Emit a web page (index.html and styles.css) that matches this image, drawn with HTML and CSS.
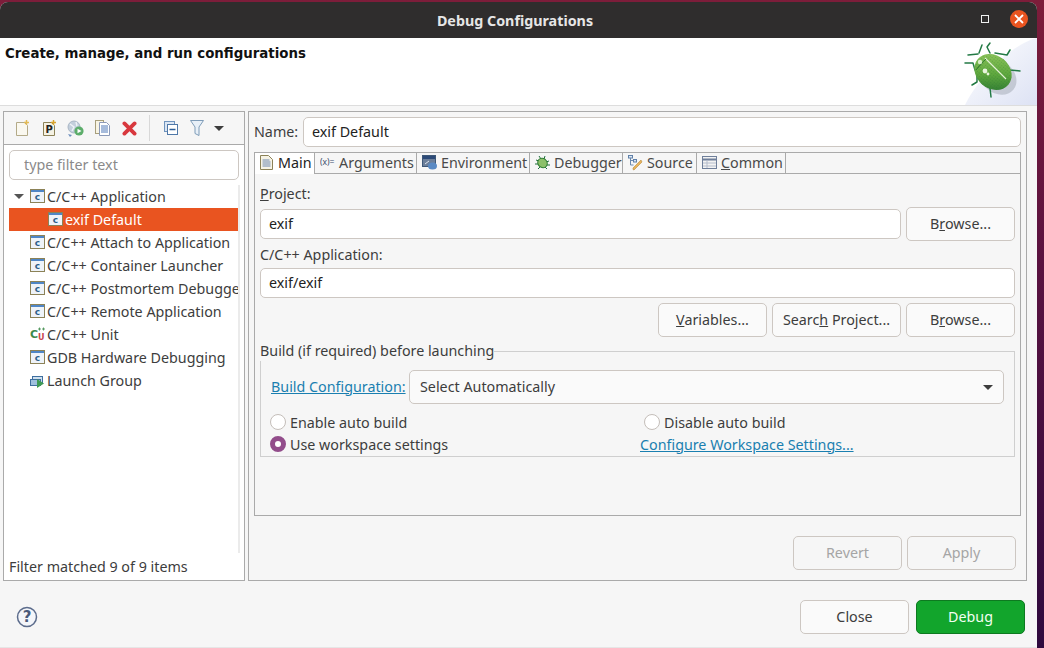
FILE: index.html
```html
<!DOCTYPE html>
<html lang="en">
<head>
  <meta charset="UTF-8" />
  <title>Debug Configurations</title>
  <link rel="stylesheet" href="styles.css">
</head>
<body>

<svg class="defs" width="0" height="0">
  <defs>
    <linearGradient id="bugBody" x1="0" y1="0" x2="1" y2="1">
      <stop offset="0" stop-color="#9ccd63"/>
      <stop offset="0.55" stop-color="#5fa83e"/>
      <stop offset="1" stop-color="#236f30"/>
    </linearGradient>
    <linearGradient id="bannerFade" x1="0" y1="0" x2="1" y2="1">
      <stop offset="0" stop-color="#ffffff"/>
      <stop offset="1" stop-color="#dde2f4"/>
    </linearGradient>
    <pattern id="bugDots" width="2.500" height="2.500" patternUnits="userSpaceOnUse">
      <circle cx="1" cy="1" r=".5" fill="#1f6b2c" opacity=".45"/>
    </pattern>
    <symbol id="app" viewBox="0 0 15 15">
      <rect x="0.5" y="0.5" width="14" height="13" fill="#eef3f9" stroke="#8c8257"/>
      <rect x="1" y="1" width="13" height="2" fill="#4f86c6"/>
      <text x="7.5" y="11" text-anchor="middle" class="icon-letter" fill="#2c5f8a">c</text>
    </symbol>
  </defs>
</svg>

<div class="window">
  <header class="titlebar">
    <h1>Debug Configurations</h1>
    <div class="wm-buttons">
      <span class="wm-max"></span>
      <span class="wm-close">
        <svg width="12" height="12" viewBox="0 0 12 12"><path d="M2 2l8 8M10 2l-8 8" stroke="#fff" stroke-width="1.800"/></svg>
      </span>
    </div>
  </header>

  <section class="banner">
    <h2>Create, manage, and run configurations</h2>
    <svg class="banner-logo" width="80" height="67" viewBox="0 0 80 67">
      <path d="M80 0C60 4 24 34 8 67H80z" fill="url(#bannerFade)"/>
      <ellipse cx="41" cy="39" rx="20" ry="16" transform="rotate(40 41 39)" fill="#8f96a0" opacity="0.4"/>
      <g fill="none" stroke="#237a45" stroke-width="1.500" stroke-linecap="round" stroke-linejoin="round">
        <path d="M33 5l-3 4 3 6"/>
        <path d="M25 7l-3 8"/>
        <path d="M11 17l10-1"/>
        <path d="M53 12l-3 5-12-2"/>
        <path d="M8 25h8l2 7"/>
        <path d="M15 47l5-3v-7"/>
        <path d="M63 33l-10-1-7-10"/>
        <path d="M34 59l-1-9-8-5"/>
      </g>
      <ellipse cx="36" cy="34" rx="20" ry="16.500" transform="rotate(40 36 34)" fill="url(#bugBody)"/>
      <ellipse cx="36" cy="34" rx="20" ry="16.500" transform="rotate(40 36 34)" fill="url(#bugDots)"/>
      <path d="M28 20l21 21" stroke="#e4f2d8" stroke-width="1.100"/>
      <path d="M29 21c-3 3-7 7-10 11" stroke="#2f7d32" stroke-width="1"/>
      <circle cx="23" cy="24" r="2.200" fill="#d8edc8"/>
      <circle cx="28" cy="33" r="2.400" fill="#e8f4dc"/>
      <circle cx="31" cy="36" r="1.400" fill="#e8f4dc"/>
    </svg>
  </section>

  <main class="workspace">
    <aside class="panel side">
      <div class="toolbar">
        <svg class="tool-new" width="14" height="16" viewBox="0 0 14 16">
          <path d="M.5 2.500h8l3 3v10H.5z" fill="#faf8ef" stroke="#b3aa88"/>
          <path d="M10.500 0v5M8 2.500h5" stroke="#e3bb55" stroke-width="1.500"/>
        </svg>
        <svg class="tool-proto" width="14" height="16" viewBox="0 0 14 16">
          <path d="M.5 2.500h8l3 3v10H.5z" fill="#f5f2e4" stroke="#8c8257"/>
          <text x="2.500" y="13" class="icon-proto" fill="#222">P</text>
          <path d="M10.500 0v5M8 2.500h5" stroke="#d9a52e" stroke-width="1.500"/>
        </svg>
        <svg class="tool-launch" width="17" height="17" viewBox="0 0 17 17">
          <circle cx="7" cy="7" r="6" fill="#c3cfdc" stroke="#a9b6c5"/>
          <path d="M3 4l4 3-2 4M9 2l1 4" stroke="#eef2f6" stroke-width="1.400" fill="none"/>
          <path d="M1 14l4 1-2 2z" fill="#6d8fbd"/>
          <circle cx="12" cy="11" r="4.600" fill="#5cad6a"/>
          <path d="M10.500 8.800l4 2.200-4 2.200z" fill="#fff"/>
        </svg>
        <svg class="tool-copy" width="15" height="16" viewBox="0 0 15 16">
          <rect x=".5" y=".5" width="8" height="13" fill="#f8f4e4" stroke="#a89f7c"/>
          <path d="M4.500 2.500h7l3 3v10h-10z" fill="#fff" stroke="#8c9ab8"/>
          <path d="M6 6h7M6 8h7M6 10h7M6 12h7" stroke="#4f78b8"/>
        </svg>
        <svg class="tool-delete" width="15" height="15" viewBox="0 0 15 15">
          <path d="M2.400 2.400l10.200 10.200M12.600 2.400L2.400 12.600" stroke="#d8383e" stroke-width="3.800" stroke-linecap="round"/>
        </svg>
        <span class="tool-sep"></span>
        <svg class="tool-collapse" width="14" height="14" viewBox="0 0 14 14">
          <rect x=".5" y=".5" width="10" height="10" fill="#dbe6f3" stroke="#6f93bd"/>
          <rect x="3.500" y="3.500" width="10" height="10" fill="#fff" stroke="#4f78a8"/>
          <path d="M5.500 8.500h6" stroke="#2f5f98" stroke-width="1.400"/>
        </svg>
        <svg class="tool-filter" width="14" height="16" viewBox="0 0 14 16">
          <path d="M.5.5h13L9 7v8.500l-4-2V7z" fill="#e8f0f8" stroke="#7f9cb8"/>
        </svg>
        <span class="tool-arrow"></span>
      </div>

      <input class="filter" type="text" placeholder="type filter text">

      <ul class="tree">
        <li class="tree-row"><span class="twisty"></span><svg class="ico"><use href="#app"/></svg>C/C++ Application</li>
        <li class="tree-row child selected"><svg class="ico"><use href="#app"/></svg>exif Default</li>
        <li class="tree-row"><svg class="ico"><use href="#app"/></svg>C/C++ Attach to Application</li>
        <li class="tree-row"><svg class="ico"><use href="#app"/></svg>C/C++ Container Launcher</li>
        <li class="tree-row"><svg class="ico"><use href="#app"/></svg>C/C++ Postmortem Debugger</li>
        <li class="tree-row"><svg class="ico"><use href="#app"/></svg>C/C++ Remote Application</li>
        <li class="tree-row">
          <svg class="ico" viewBox="0 0 15 15">
            <text x="0" y="10.500" class="icon-unit-c" fill="#3d8a4a">C</text>
            <path d="M8 2h3M9.500.5v3M12 2h3M13.500.5v3" stroke="#3d8a4a" stroke-width=".8"/>
            <text x="8" y="13" class="icon-small" fill="#c8444c">U</text>
          </svg>C/C++ Unit</li>
        <li class="tree-row"><svg class="ico"><use href="#app"/></svg>GDB Hardware Debugging</li>
        <li class="tree-row">
          <svg class="ico" viewBox="0 0 15 15">
            <rect x="2.500" y="3.500" width="10" height="7" fill="#cfe0ef" stroke="#3f6f9f"/>
            <rect x=".5" y="6.500" width="10" height="6" fill="#9fc0de" stroke="#3f6f9f"/>
            <path d="M7 6l7 4.500L7 15z" fill="#3f9a55"/>
          </svg>Launch Group</li>
      </ul>

      <p class="match-count">Filter matched 9 of 9 items</p>
    </aside>

    <section class="panel detail">
      <div class="name-row">
        <label for="cfgName">Name:</label>
        <input class="field" id="cfgName" type="text" value="exif Default">
      </div>

      <div class="tab-folder">
        <div class="tabs">
          <div class="tab active">
            <svg class="tab-ico main-ico" width="13" height="15" viewBox="0 0 13 15">
              <path d="M.5.5h8l4 4v10H.5z" fill="#f6f3e6" stroke="#8c8257"/>
              <path d="M2.500 5h7M2.500 7h8M2.500 9h8M2.500 11h8" stroke="#6f88b0"/>
            </svg>Main</div>
          <div class="tab">
            <svg class="tab-ico" width="15" height="15" viewBox="0 0 15 15">
              <text x="0" y="10" class="icon-args" fill="#3a4a6a">(x)=</text>
            </svg>Arguments</div>
          <div class="tab">
            <svg class="tab-ico" width="15" height="15" viewBox="0 0 15 15">
              <rect x=".5" y=".5" width="13" height="11" fill="#6c7f9a" stroke="#3e5878"/>
              <rect x="1" y="1" width="12" height="3" fill="#2c4a78"/>
              <path d="M3 9l4-3" stroke="#dfe6ef"/>
              <ellipse cx="10.500" cy="11" rx="4.500" ry="3.500" fill="#5a8ac4"/>
            </svg>Environment</div>
          <div class="tab">
            <svg class="tab-ico" width="15" height="15" viewBox="0 0 15 15">
              <g stroke="#1f6e3c" stroke-width="1" fill="none">
                <path d="M4 1l2 3M10 1l-1 3M1 5l3 1M14 6l-3 1M0 9h3M15 10h-3M3 14l2-2M12 14l-2-2"/>
              </g>
              <ellipse cx="7.500" cy="8" rx="5" ry="4.500" transform="rotate(40 7.500 8)" fill="#8cc06a" stroke="#2f7d32"/>
            </svg>Debugger</div>
          <div class="tab">
            <svg class="tab-ico" width="15" height="16" viewBox="0 0 15 16">
              <path d="M2.500 2v8h3M2.500 5.500h3" stroke="#6c8ab0" fill="none"/>
              <rect x="0.500" y="0.500" width="4" height="2.500" fill="#dbe6f3" stroke="#5f80a8"/>
              <rect x="5.500" y="4.500" width="3" height="2.500" fill="#dbe6f3" stroke="#5f80a8"/>
              <path d="M14 7l-8 8-1-.5 0-1.500 8-8z" fill="#e8b45a" stroke="#b98a3c" stroke-width=".6"/>
            </svg>Source</div>
          <div class="tab">
            <svg class="tab-ico" width="15" height="14" viewBox="0 0 15 14">
              <rect x=".5" y=".5" width="14" height="12" fill="#f3f3f3" stroke="#6f7f9a"/>
              <path d="M1 3.500h13" stroke="#6f7f9a" stroke-width="2"/>
              <path d="M5 4v8M1 7h13M1 10h13" stroke="#b4bccb"/>
            </svg><u>C</u>ommon</div>
        </div>

        <div class="tab-body">
          <label class="field-label"><u>P</u>roject:</label>
          <div class="field-row">
            <input class="field grow" type="text" value="exif">
            <button class="btn" type="button">B<u>r</u>owse...</button>
          </div>

          <label class="field-label second">C/C++ Application:</label>
          <input class="field app-path" type="text" value="exif/exif">

          <div class="button-row">
            <button class="btn" type="button"><u>V</u>ariables...</button>
            <button class="btn wide" type="button">Searc<u>h</u> Project...</button>
            <button class="btn" type="button">B<u>r</u>owse...</button>
          </div>

          <fieldset class="group">
            <legend>Build (if required) before launching</legend>
            <div class="config-row">
              <a class="link" href="#">Build Configuration:</a>
              <div class="combo">Select Automatically<span class="combo-arrow"></span></div>
            </div>
            <div class="radio-grid">
              <span class="radio-item"><span class="radio"></span>Enable auto build</span>
              <span class="radio-item indent"><span class="radio"></span>Disable auto build</span>
              <span class="radio-item"><span class="radio checked"></span>Use workspace settings</span>
              <a class="link" href="#">Configure Workspace Settings...</a>
            </div>
          </fieldset>
        </div>
      </div>

      <div class="apply-row">
        <button class="btn" type="button" disabled>Revert</button>
        <button class="btn" type="button" disabled>Apply</button>
      </div>
    </section>
  </main>

  <footer class="dialog-footer">
    <svg class="help" width="22" height="22" viewBox="0 0 22 22">
      <circle cx="11" cy="11" r="9.500" fill="#f4f6fa" stroke="#5c6c8c" stroke-width="1.500"/>
      <text x="11" y="16" text-anchor="middle" class="icon-help" fill="#4a5a7a">?</text>
    </svg>
    <div class="footer-buttons">
      <button class="btn" type="button">Close</button>
      <button class="btn primary" type="button">Debug</button>
    </div>
  </footer>
</div>

</body>
</html>
```

FILE: styles.css
```css
* {
  box-sizing: border-box;
}
html, body {
  height: 100%;
}
body {
  margin: 0;
  overflow: hidden;
  padding-top: 2px;
  background: linear-gradient(to bottom, #7d1d3a, #5a1240 40%, #2f0a3e);
  font-family: "Noto Sans", sans-serif;
  font-size: 14.300px;
  color: #3d3d3d;
}
.defs {
  position: absolute;
}
.window {
  width: 1037px;
  height: 646px;
  display: flex;
  flex-direction: column;
  background: #f6f6f6;
  border-bottom: 1px solid #e6e6e6;
  border-radius: 8px 8px 0 0;
  overflow: hidden;
}

/* title bar */
.titlebar {
  height: 36px;
  flex: none;
  display: flex;
  align-items: center;
  justify-content: center;
  padding-right: 7px;
  background: #2f2d2d;
  position: relative;
}
.titlebar h1 {
  margin: 0;
  font-size: 14.300px;
  font-weight: 700;
  color: #e6e6e6;
}
.wm-buttons {
  position: absolute;
  right: 9px;
  top: 8px;
  display: flex;
  align-items: center;
  gap: 21px;
}
.wm-max {
  width: 8px;
  height: 8px;
  border: 1px solid #f0f0f0;
}
.wm-close {
  width: 18px;
  height: 18px;
  border-radius: 50%;
  background: #e95420;
  display: flex;
  align-items: center;
  justify-content: center;
}

/* banner */
.banner {
  height: 68px;
  flex: none;
  display: flex;
  justify-content: space-between;
  background: #fff;
  border-bottom: 1px solid #ddd;
}
.banner h2 {
  margin: 8px 0 0 5px;
  font-family: "DejaVu Sans", sans-serif;
  font-size: 13.350px;
  font-weight: 700;
  color: #111;
}
.banner-logo {
  flex: none;
}

/* panels */
.workspace {
  flex: none;
  height: 470px;
  margin-top: 5px;
  padding-left: 3px;
  display: flex;
  gap: 3px;
}
.panel {
  border: 1px solid #aaa;
  display: flex;
  flex-direction: column;
}
.side {
  width: 242px;
  background: #fff;
}
.detail {
  width: 779px;
  padding: 5px 5px 10px;
  background: #f6f6f6;
}

/* left toolbar */
.toolbar {
  height: 33px;
  flex: none;
  display: flex;
  align-items: center;
  background: #f6f6f6;
  border-bottom: 1px solid #aaa;
  padding-left: 12px;
}
.toolbar svg {
  flex: none;
}
.tool-proto {
  margin-left: 13px;
}
.tool-launch {
  margin-left: 10px;
}
.tool-copy {
  margin-left: 11px;
}
.tool-delete {
  margin-left: 12px;
}
.tool-sep {
  width: 1px;
  height: 26px;
  margin-left: 12px;
  background: #d8d8d8;
}
.tool-collapse {
  margin-left: 14px;
}
.tool-filter {
  margin-left: 12px;
}
.tool-arrow {
  margin-left: 10px;
  border-left: 5px solid transparent;
  border-right: 5px solid transparent;
  border-top: 5px solid #3d3d3d;
}

.filter {
  flex: none;
  height: 30px;
  margin: 5px 5px 0;
  padding: 0 14px 2px;
  border: 1px solid #cdc7c2;
  border-radius: 5px;
  font: inherit;
  background: #fff;
}
.filter::placeholder {
  color: #8a8a8a;
}

/* tree */
.tree {
  flex: 1;
  list-style: none;
  margin: 5px 4px 0 5px;
  padding: 0;
  overflow: hidden;
  border-right: 2px solid #ebebeb;
}
.tree-row {
  height: 23px;
  display: flex;
  align-items: center;
  padding-left: 21px;
  white-space: nowrap;
}
.tree-row.child {
  padding-left: 39px;
}
.tree-row.selected {
  background: #e95420;
  color: #fff;
}
.twisty {
  position: absolute;
  margin-left: -16px;
  border-left: 5px solid transparent;
  border-right: 5px solid transparent;
  border-top: 5px solid #555;
}
.ico {
  width: 15px;
  height: 15px;
  margin-right: 2px;
  flex: none;
}
.icon-letter {
  font: 700 9px "DejaVu Sans", sans-serif;
}
.icon-proto {
  font: 700 10px "DejaVu Sans", sans-serif;
}
.icon-unit-c {
  font: 700 11px "DejaVu Sans", sans-serif;
}
.icon-small {
  font: 700 8px "DejaVu Sans", sans-serif;
}
.icon-args {
  font: 400 8.500px "Noto Sans", sans-serif;
}
.icon-help {
  font: 700 15px "DejaVu Sans", sans-serif;
}
.match-count {
  flex: none;
  height: 27px;
  margin: 0;
  padding: 4px 0 0 5px;
}

/* right side */
.name-row {
  display: flex;
  align-items: center;
  flex: none;
}
.name-row label {
  width: 49px;
  padding-bottom: 2px;
}
.field {
  height: 30px;
  padding: 0 8px 2px;
  border: 1px solid #cdc7c2;
  border-radius: 5px;
  background: #fff;
  font: inherit;
  color: #222;
  min-width: 0;
}
.name-row .field, .grow {
  flex: 1;
}
.tab-folder {
  flex: none;
  height: 364px;
  margin-top: 5px;
  border: 1px solid #aaa;
  display: flex;
  flex-direction: column;
}
.tabs {
  flex: none;
  height: 21px;
  display: grid;
  grid-template-columns: 60px 102px 113px 93px 74px 89px;
  justify-content: start;
  border-bottom: 1px solid #aaa;
}
.tab {
  height: 20px;
  display: flex;
  align-items: center;
  padding: 0 0 1px 5px;
  border-right: 1px solid #aaa;
  white-space: nowrap;
  color: #4a4a4a;
}
.tab.active {
  height: 21px;
  background: #fff;
  color: #222;
  padding-bottom: 2px;
}
.tab-ico {
  flex: none;
  margin-right: 4px;
}
.tab-ico.main-ico {
  margin-right: 5px;
}
.tab-body {
  flex: 1;
  padding: 10px 5px 0;
}
.field-label {
  display: block;
  height: 20px;
  line-height: 20px;
}
.field-label.second {
  margin-top: 4px;
}
.field-row {
  display: flex;
  align-items: center;
  gap: 5px;
  margin-top: 3px;
}
.app-path {
  display: block;
  width: 100%;
  margin-top: 3px;
}
.button-row {
  display: flex;
  justify-content: flex-end;
  gap: 5px;
  margin-top: 5px;
}
.btn {
  width: 109px;
  height: 34px;
  flex: none;
  padding: 0 0 2px;
  border: 1px solid #cdc7c2;
  border-radius: 5px;
  background: #fafafa;
  font: inherit;
  color: #3d3d3d;
}
.btn.wide {
  width: 129px;
}
.btn:disabled {
  background: #f6f6f6;
  color: #a5a5a5;
}
.btn.primary {
  background: #12a52c;
  border-color: #0d7a20;
  color: #f2fff2;
}

/* build group */
.group {
  margin: 4px 0 0;
  padding: 9px 10px 1px;
  border: 1px solid #cfcfcf;
  min-width: 0;
}
.group legend {
  margin-left: -11px;
  padding: 0;
  height: 20px;
  line-height: 20px;
}
.config-row {
  display: flex;
  align-items: center;
  justify-content: space-between;
}
.config-row .link {
  padding-bottom: 2px;
}
.link {
  color: #1a7fb0;
  text-decoration: underline;
}
.combo {
  width: 595px;
  height: 34px;
  padding: 0 10px 2px;
  display: flex;
  align-items: center;
  justify-content: space-between;
  border: 1px solid #cdc7c2;
  border-radius: 5px;
  background: #fafafa;
  color: #3d3d3d;
}
.combo-arrow {
  margin-top: 2px;
  border-left: 5px solid transparent;
  border-right: 5px solid transparent;
  border-top: 5px solid #3d3d3d;
}
.radio-grid {
  display: grid;
  grid-template-columns: 369px 1fr;
  grid-auto-rows: 22px;
  align-items: center;
  margin-top: 7px;
}
.radio-item {
  display: flex;
  align-items: center;
  gap: 4px;
  margin-left: -1px;
}
.radio-item.indent {
  margin-left: 4px;
}
.radio {
  width: 16px;
  height: 16px;
  border-radius: 50%;
  border: 1px solid #c4beb9;
  background: #fff;
  flex: none;
}
.radio.checked {
  border: 5px solid #924d8b;
}
.apply-row {
  margin-top: auto;
  margin-right: 5px;
  display: flex;
  justify-content: flex-end;
  gap: 5px;
}

/* footer */
.dialog-footer {
  flex: 1;
  display: flex;
  align-items: flex-start;
  justify-content: space-between;
  padding: 19px 12px 0 16px;
}
.help {
  margin-top: 6px;
}
.footer-buttons {
  display: flex;
  gap: 7px;
}
```
